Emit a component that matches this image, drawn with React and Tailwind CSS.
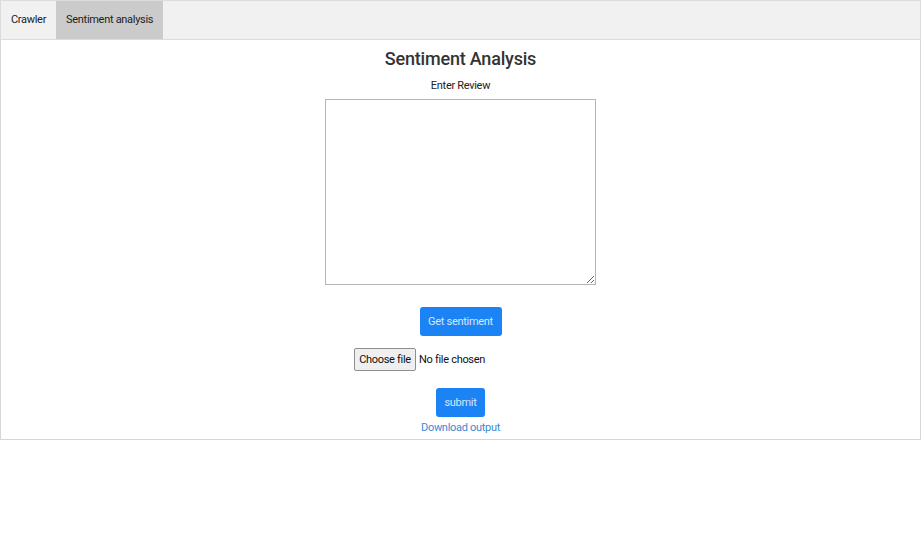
import React from "react";

export default function App() {
  return (
    <div className="w-[921px] h-[546px] bg-white font-['Roboto',sans-serif] text-[#222] tracking-[-0.3px]">
      <nav className="flex h-10 bg-[#f1f1f1] border border-[#dcdcdc] text-[11px]">
        <a className="flex items-center pt-[1px] px-[10px] text-[#222]">Crawler</a>
        <a className="flex items-center pt-[1px] px-[10px] bg-[#cbcbcb] text-[#222]">Sentiment analysis</a>
      </nav>
      <main className="h-[400px] border border-t-0 border-[#d6d6d6] flex flex-col items-center">
        <h1 className="mt-[7px] text-[18px] leading-[24px] font-medium tracking-[-0.2px] text-[#333]">
          Sentiment Analysis
        </h1>
        <label className="mt-[8px] text-[11px] leading-[14px] text-[#222]">Enter Review</label>
        <textarea className="mt-[6px] w-[271px] h-[186px] border border-[#b5b5b5] resize" />
        <button className="mt-[22px] h-[29px] w-[82px] pt-[1px] rounded-[3px] bg-[#1b83f4] text-[#d6e8ff] text-[11px]">
          Get sentiment
        </button>
        <div className="mt-[12px] w-[213px] flex items-center text-[11px]">
          <span className="h-[23px] w-[62px] pt-[1px] flex items-center justify-center bg-[#efefef] border border-[#8f8f8f] rounded-[2px] text-[#111]">
            Choose file
          </span>
          <span className="ml-[3px] pt-[1px] text-[#111]">No file chosen</span>
        </div>
        <button className="mt-[17px] h-[29px] w-[49px] pt-[1px] rounded-[3px] bg-[#1b83f4] text-[#d6e8ff] text-[11px]">
          submit
        </button>
        <a className="mt-[3px] text-[11px] text-[#3b89d4]">Download output</a>
      </main>
    </div>
  );
}
